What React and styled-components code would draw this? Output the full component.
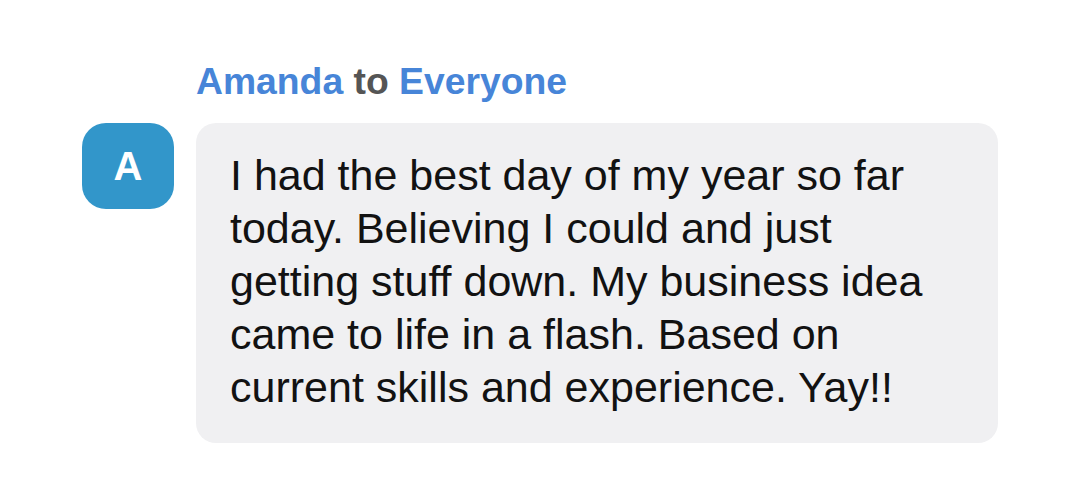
import React from 'react';
import styled, { createGlobalStyle } from 'styled-components';

const GlobalStyle = createGlobalStyle`
  html, body {
    margin: 0;
    padding: 0;
    background: #ffffff;
  }
  body {
    font-family: "Liberation Sans", Arial, sans-serif;
  }
`;

const Page = styled.div`
  padding: 60px 0 0 82px;
  width: 1080px;
  height: 500px;
  box-sizing: border-box;
`;

const Header = styled.div`
  margin-left: 114px;
  margin-bottom: 21px;
  font-size: 37.3px;
  line-height: 42px;
  font-weight: 700;
  color: #555555;
`;

const Name = styled.span`
  color: #4785d8;
`;

const Row = styled.div`
  display: flex;
  align-items: flex-start;
  gap: 22px;
`;

const Avatar = styled.div`
  flex: none;
  width: 92px;
  height: 86px;
  border-radius: 24px;
  background: #3296ca;
  color: #ffffff;
  display: flex;
  align-items: center;
  justify-content: center;
  font-size: 40px;
  font-weight: 700;
`;

const Bubble = styled.div`
  width: 802px;
  box-sizing: border-box;
  padding: 26px 40px 29px 34px;
  border-radius: 20px;
  background: #f0f0f2;
  color: #121212;
  font-size: 43px;
  line-height: 53px;
`;

const App = () => (
  <>
    <GlobalStyle />
    <Page>
      <Header>
        <Name>Amanda</Name> to <Name>Everyone</Name>
      </Header>
      <Row>
        <Avatar>A</Avatar>
        <Bubble>
          I had the best day of my year so far today. Believing I could and just
          getting stuff down. My business idea came to life in a flash. Based on
          current skills and experience. Yay!!
        </Bubble>
      </Row>
    </Page>
  </>
);

export default App;
